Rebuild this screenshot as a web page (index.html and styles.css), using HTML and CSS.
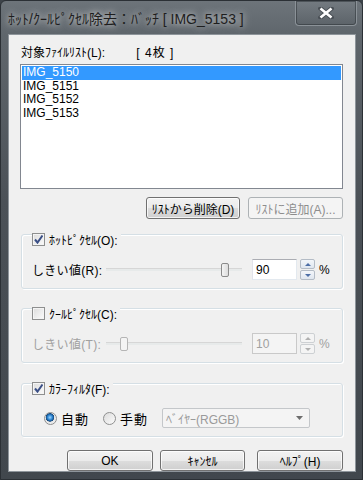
FILE: index.html
```html
<!DOCTYPE html>
<html lang="ja">
<head>
    <meta charset="UTF-8">
    <title>ﾎｯﾄ/ｸｰﾙﾋﾟｸｾﾙ除去</title>
    <link rel="stylesheet" href="styles.css">
</head>
<body>

    <div class="window">
        <!-- Barra de titulo -->
        <div class="titlebar">
            <span class="title">ﾎｯﾄ/ｸｰﾙﾋﾟｸｾﾙ除去：ﾊﾞｯﾁ [ IMG_5153 ]</span>
            <div class="close">
                <svg width="16" height="12" viewBox="0 0 16 12">
                    <path d="M2.5 1.5 L13.5 10.5 M13.5 1.5 L2.5 10.5" stroke="#4a5056" stroke-width="4.5" stroke-linecap="square"/>
                    <path d="M2.5 1.5 L13.5 10.5 M13.5 1.5 L2.5 10.5" stroke="#ffffff" stroke-width="2.6"/>
                </svg>
            </div>
        </div>

        <div class="client">
            <div class="list-label">
                <span>対象ﾌｧｲﾙﾘｽﾄ(L):</span>
                <span class="count">[ 4枚 ]</span>
            </div>

            <ul class="filelist">
                <li class="selected">IMG_5150</li>
                <li>IMG_5151</li>
                <li>IMG_5152</li>
                <li>IMG_5153</li>
            </ul>

            <div class="list-buttons">
                <button class="btn btn-wide">ﾘｽﾄから削除(D)</button>
                <button class="btn btn-add" disabled>ﾘｽﾄに追加(A)...</button>
            </div>

            <!-- Pixeles calientes -->
            <div class="group">
                <div class="group-head">
                    <span class="check checked"></span>
                    <span>ﾎｯﾄﾋﾟｸｾﾙ(O):</span>
                </div>
                <div class="threshold">
                    <span class="th-label">しきい値(R):</span>
                    <div class="slider">
                        <span class="thumb" style="margin-left: 115px"></span>
                    </div>
                    <div class="edit">90</div>
                    <div class="spin">
                        <span class="spin-up"></span>
                        <span class="spin-down"></span>
                    </div>
                    <span class="unit">%</span>
                </div>
            </div>

            <!-- Pixeles frios (desactivado) -->
            <div class="group group-cool">
                <div class="group-head">
                    <span class="check"></span>
                    <span>ｸｰﾙﾋﾟｸｾﾙ(C):</span>
                </div>
                <div class="threshold disabled">
                    <span class="th-label">しきい値(T):</span>
                    <div class="slider">
                        <span class="thumb" style="margin-left: 14px"></span>
                    </div>
                    <div class="edit">10</div>
                    <div class="spin">
                        <span class="spin-up"></span>
                        <span class="spin-down"></span>
                    </div>
                    <span class="unit">%</span>
                </div>
            </div>

            <!-- Filtro de color -->
            <div class="group group-filter">
                <div class="group-head">
                    <span class="check checked"></span>
                    <span>ｶﾗｰﾌｨﾙﾀ(F):</span>
                </div>
                <div class="filter-row">
                    <span class="radio on"></span>
                    <span class="radio-text">自動</span>
                    <span class="radio"></span>
                    <span class="radio-text">手動</span>
                    <div class="combo">
                        <span>ﾍﾞｲﾔｰ(RGGB)</span>
                        <svg width="7" height="4" viewBox="0 0 7 4"><path d="M0 0 H7 L3.5 4 Z" fill="#6d6d6d"/></svg>
                    </div>
                </div>
            </div>

            <div class="dialog-buttons">
                <button class="btn btn-ok">OK</button>
                <button class="btn btn-cancel">ｷｬﾝｾﾙ</button>
                <button class="btn btn-help">ﾍﾙﾌﾟ(H)</button>
            </div>
        </div>
    </div>

</body>
</html>
```

FILE: styles.css
```css
/* Ventana general */
body {
    margin: 0;
    background-color: #3d4349;
    font-family: 'Liberation Sans', 'Noto Sans CJK JP', sans-serif;
    font-size: 12px;
    color: #000;
}

.window {
    width: 363px;
    height: 480px;
    box-sizing: border-box;
    background: linear-gradient(to bottom, #6d747a 0, #5f666c 34px, #4b5157 200px, #41474d 100%);
    border: 1px solid #2b3035;
    border-radius: 6px 6px 0 0;
    display: flex;
    flex-direction: column;
}

.titlebar {
    height: 33px;
    display: flex;
    justify-content: space-between;
    align-items: flex-start;
}

.title {
    margin: 7px 0 0 7px;
    font-size: 14px;
    color: #1e1e1e;
    text-shadow: 0 0 6px rgba(255, 255, 255, 0.7), 0 0 10px rgba(255, 255, 255, 0.5);
}

.close {
    width: 60px;
    height: 24px;
    margin-right: 5px;
    border: 1px solid #8b9298;
    border-top: none;
    border-radius: 0 0 4px 4px;
    background: linear-gradient(to bottom, #747b81, #5c6369);
    box-shadow: inset 0 0 0 1px rgba(40, 45, 50, 0.5);
    display: flex;
    justify-content: center;
    align-items: center;
}

.client {
    margin: 0 6px 0 7px;
    height: 438px;
    box-sizing: border-box;
    background-color: #f0f0f0;
    border: 1px solid #8e959b;
    padding: 0 12px 0 11px;
    display: flex;
    flex-direction: column;
}

/* Lista de archivos */
.list-label {
    margin-top: 11px;
    height: 14px;
    line-height: 14px;
    padding-left: 1px;
}

.count {
    margin-left: 28px;
    letter-spacing: 1px;
}

.filelist {
    list-style: none;
    margin: 4px 0 0 0;
    padding: 1px;
    height: 126px;
    box-sizing: border-box;
    background-color: #fff;
    border: 1px solid #828790;
}

.filelist li {
    height: 13.5px;
    line-height: 13.5px;
    padding-left: 1px;
}

.filelist li.selected {
    background-color: #3399ff;
    color: #fff;
}

.list-buttons {
    margin-top: 8px;
    display: flex;
    justify-content: flex-end;
    gap: 8px;
}

/* Botones */
.btn {
    height: 22px;
    box-sizing: border-box;
    font-family: inherit;
    font-size: 12px;
    color: #000;
    padding: 0;
    border: 1px solid #707070;
    border-radius: 3px;
    background: linear-gradient(to bottom, #f2f2f2 0%, #ebebeb 50%, #dddddd 51%, #cfcfcf 100%);
    box-shadow: inset 0 0 0 1px rgba(255, 255, 255, 0.75);
}

.btn:disabled {
    color: #8d8d8d;
    border-color: #adb2b5;
    background: #f4f4f4;
    box-shadow: none;
}

.btn-wide {
    width: 94px;
}

.btn-add {
    width: 95px;
}

/* Grupos */
.group {
    margin: 15px 0 0 1px;
    border: 1px solid #d5dfe5;
    border-radius: 3px;
    box-shadow: inset 1px 1px 0 #fff, 1px 1px 0 #fff;
    padding: 0 10px 8px 10px;
}

.group-cool {
    margin-top: 19px;
}

.group-filter {
    margin-top: 20px;
}

.group-head {
    margin: -5px 0 0 0;
    display: inline-flex;
    align-items: center;
    gap: 4px;
    height: 14px;
    padding-right: 3px;
    background-color: #f0f0f0;
}

.check {
    width: 13px;
    height: 13px;
    box-sizing: border-box;
    border: 1px solid #8e8f8f;
    background: linear-gradient(135deg, #dcdcdc, #fbfbfb);
    box-shadow: inset 0 0 0 1px #f4f4f4;
    display: inline-block;
}

.check.checked {
    background: url("data:image/svg+xml;utf8,<svg xmlns='http://www.w3.org/2000/svg' width='11' height='11'><path d='M2 5.5 L4.5 8.5 L9.5 1.5' fill='none' stroke='%233a4f86' stroke-width='2'/></svg>") center no-repeat, linear-gradient(135deg, #dcdcdc, #fbfbfb);
}

.threshold {
    margin-top: 10px;
    display: flex;
    align-items: center;
    height: 21px;
}

.th-label {
    width: 74px;
    letter-spacing: 0.3px;
}

.slider {
    width: 136px;
    height: 15px;
    display: flex;
    align-items: center;
    background: linear-gradient(to bottom, transparent 6px, #d6d6d6 6px, #d6d6d6 7px, #e7eaea 7px, #e7eaea 9px, transparent 9px);
}

.thumb {
    width: 8px;
    height: 14px;
    box-sizing: border-box;
    border: 1px solid #8a8a8a;
    border-radius: 2px;
    background: linear-gradient(to right, #f4f4f4, #dcdcdc);
}

.edit {
    margin-left: 10px;
    width: 45px;
    height: 21px;
    box-sizing: border-box;
    border: 1px solid #abadb3;
    border-color: #abadb3 #e3e9ef #e3e9ef #e2e3ea;
    background-color: #fff;
    padding: 3px 0 0 3px;
    font-size: 12px;
}

.spin {
    margin-left: 3px;
    width: 15px;
    height: 21px;
    display: flex;
    flex-direction: column;
    gap: 1px;
}

.spin span {
    flex: 1;
    border: 1px solid #b4bcc6;
    border-radius: 2px;
    background: linear-gradient(to bottom, #f3f6fa, #dfe6ef);
    display: flex;
    justify-content: center;
    align-items: center;
}

.spin-up::after,
.spin-down::after {
    content: "";
    border-left: 3px solid transparent;
    border-right: 3px solid transparent;
}

.spin-up::after {
    border-bottom: 3px solid #4d6ea6;
}

.spin-down::after {
    border-top: 3px solid #4d6ea6;
}

.unit {
    margin-left: 4px;
}

/* Estado desactivado */
.disabled {
    color: #a0a0a0;
}

.disabled .thumb {
    border-color: #b5b5b5;
    background: #f4f4f4;
}

.disabled .edit {
    border-color: #c9c9c9;
    background-color: #f4f4f4;
}

.disabled .spin span {
    border-color: #cdd0d3;
    background: #f4f4f4;
}

.disabled .spin-up::after {
    border-bottom-color: #b0b0b0;
}

.disabled .spin-down::after {
    border-top-color: #b0b0b0;
}

/* Filtro de color */
.filter-row {
    margin-top: 10px;
    display: flex;
    align-items: center;
    height: 20px;
    padding-left: 12px;
}

.radio {
    width: 13px;
    height: 13px;
    box-sizing: border-box;
    border-radius: 50%;
    border: 1px solid #8e8f8f;
    background: linear-gradient(135deg, #dcdcdc, #fbfbfb);
}

.radio.on {
    background: radial-gradient(circle at 45% 40%, #9fd6ff 0, #2a83d0 2.5px, #17497c 4px, #e6e6e6 4.5px, #f6f6f6 100%);
}

.radio-text {
    margin: 0 14px 0 4px;
    font-size: 13px;
    letter-spacing: 1px;
}

.combo {
    width: 148px;
    height: 20px;
    box-sizing: border-box;
    border: 1px solid #c4c7ca;
    border-radius: 2px;
    background-color: #f4f4f4;
    color: #9a9a9a;
    display: flex;
    align-items: center;
    justify-content: space-between;
    padding: 0 6px 0 3px;
}

.dialog-buttons {
    margin-top: 13px;
    display: flex;
    gap: 7px;
    padding-left: 47px;
}

.btn-ok,
.btn-cancel,
.btn-help {
    width: 86px;
    height: 21px;
}

.btn-help {
    margin-left: 5px;
}
```
